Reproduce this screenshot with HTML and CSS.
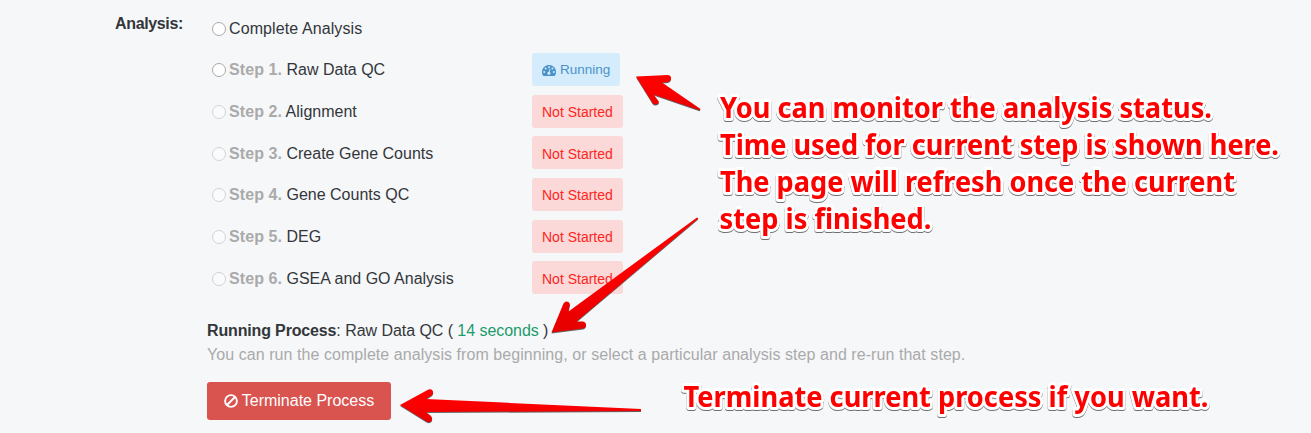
FILE: index.html
```html
<!DOCTYPE html>
<html lang="en">
<head>
<meta charset="utf-8">
<title>Analysis</title>
<link rel="stylesheet" href="styles.css">
</head>
<body>
<form class="form">
  <div class="form-label">Analysis:</div>
  <div class="form-body">
    <div class="steps">
      <label class="step"><span class="radio"></span><span class="name whole">Complete Analysis</span></label>
      <label class="step"><span class="radio"></span><span class="name"><b>Step 1.</b> Raw Data QC</span>
        <span class="badge running"><svg class="gauge" viewBox="0 0 14 11"><path fill="currentColor" d="M7 0A7 7 0 0 0 1.1 10.7Q1.3 11 1.7 11H12.300Q12.700 11 12.900 10.700A7 7 0 0 0 7 0Z"/><g fill="#d4ecfb"><circle cx="2.200" cy="7" r="1"/><circle cx="3.600" cy="3.600" r="1"/><circle cx="7" cy="2.200" r="1"/><circle cx="10.400" cy="3.600" r="1"/><circle cx="11.800" cy="7" r="1"/><circle cx="6.900" cy="8.300" r="1.500"/></g><path d="M7 8 7.900 4.300" stroke="#d4ecfb" stroke-width=".9" stroke-linecap="round"/></svg>Running</span></label>
      <label class="step off"><span class="radio"></span><span class="name"><b>Step 2.</b> Alignment</span><span class="badge">Not Started</span></label>
      <label class="step off"><span class="radio"></span><span class="name"><b>Step 3.</b> Create Gene Counts</span><span class="badge">Not Started</span></label>
      <label class="step off"><span class="radio"></span><span class="name"><b>Step 4.</b> Gene Counts QC</span><span class="badge">Not Started</span></label>
      <label class="step off"><span class="radio"></span><span class="name"><b>Step 5.</b> DEG</span><span class="badge">Not Started</span></label>
      <label class="step off"><span class="radio"></span><span class="name"><b>Step 6.</b> GSEA and GO Analysis</span><span class="badge">Not Started</span></label>
    </div>
    <div class="process"><b>Running Process</b>: Raw Data QC ( <span class="time">14 seconds</span> )</div>
    <div class="help">You can run the complete analysis from beginning, or select a particular analysis step and re-run that step.</div>
    <button class="terminate" type="button"><svg class="ban" viewBox="0 0 14 14" fill="none" stroke="currentColor" stroke-width="1.900"><circle cx="7" cy="7" r="5.900"/><path d="M11 3 3 11"/></svg>Terminate Process</button>
  </div>
</form>
<svg class="notes" viewBox="0 0 1311 433">
  <defs>
    <linearGradient id="red" x1="0" y1="0" x2="0" y2="1"><stop offset="0" stop-color="#f00"/><stop offset=".5" stop-color="#fb0000"/><stop offset="1" stop-color="#e60000"/></linearGradient>
  </defs>
  <g class="arrows" fill="url(#red)">
    <path d="M636 76.500 668 75Q671.500 75.500 671 79Q670.500 81.500 668 82L662 82.500 700.500 109 699.500 110.200 653.500 94.500 658.500 101Q659.500 104 656 104.500Q654 105 652.500 103Z"/>
    <path d="M551.500 332.500 563.500 303.500Q565.500 300.500 568.500 302Q570.500 303.500 569.500 306.500L568.500 311.500 697 217.500 698.300 218.500 576.500 321.500 583 321.500Q586 322 586 325Q586 327.500 583 328.500Z"/>
    <path d="M400 405 428.500 389.500Q432 388.500 433 391.500Q433.500 394 431.500 395.500L426 399 641 409 641 411 426 412 431 416Q433 418.500 431.500 421Q429.500 423 426.500 421.500Z"/>
  </g>
  <g class="callout">
    <text x="720" y="118" textLength="492" lengthAdjust="spacingAndGlyphs">You can monitor the analysis status.</text>
    <text x="720" y="155" textLength="559" lengthAdjust="spacingAndGlyphs">Time used for current step is shown here.</text>
    <text x="720" y="192" textLength="515" lengthAdjust="spacingAndGlyphs">The page will refresh once the current</text>
    <text x="719.500" y="229" textLength="212" lengthAdjust="spacingAndGlyphs">step is finished.</text>
    <text x="683.500" y="407" textLength="525" lengthAdjust="spacingAndGlyphs">Terminate current process if you want.</text>
  </g>
</svg>
</body>
</html>
```
FILE: styles.css
```css
body {
  margin: 0;
  height: 433px;
  overflow: hidden;
  position: relative;
  background: #f6f7f9;
  color: #333639;
  font: 16px/24px "Liberation Sans", Arial, sans-serif;
}
.form {
  display: grid;
  grid-template-columns: 183px 1fr;
  column-gap: 24px;
}
.form-label {
  padding-top: 12px;
  text-align: right;
  font-weight: bold;
  letter-spacing: -.35px;
}
.form-body { padding-top: 7px; }
.steps { padding-left: 5px; }
.step {
  display: flex;
  align-items: center;
  height: 41.670px;
}
.radio {
  box-sizing: border-box;
  width: 14px;
  height: 14px;
  margin: 2px 3px 0 0;
  border: 1px solid #a9a9a9;
  border-radius: 50%;
  background: #fff;
}
.off .radio { border-color: #d2d3d4; background: #fafbfc; }
.name { width: 303px; padding-top: 1.500px; }
.name b { color: #aaa; letter-spacing: .08px; }
.whole { letter-spacing: .1px; }
.badge {
  display: flex;
  align-items: center;
  box-sizing: border-box;
  height: 33px;
  padding: 2px 10px 0;
  border-radius: 3px;
  background: #fad9d8;
  color: #ff261d;
  font-size: 14px;
  white-space: nowrap;
}
.badge.running { background: #d4ecfb; color: #4a93c9; font-size: 13.500px; }
.gauge { width: 14px; height: 11px; margin-right: 4px; }
.process { margin-top: 20px; letter-spacing: -.05px; }
.process b { letter-spacing: -.15px; }
.time { color: #1c9c6b; }
.help { color: #aaa; letter-spacing: .06px; }
.terminate {
  display: flex;
  align-items: center;
  justify-content: center;
  gap: 4px;
  width: 184px;
  height: 38px;
  margin-top: 15px;
  padding: 1px 0 0;
  border: 0;
  border-radius: 3px;
  background: #d9534f;
  color: #fff;
  font: inherit;
  white-space: nowrap;
}
.ban { width: 14px; height: 14px; }
.notes {
  position: absolute;
  inset: 0;
  width: 1311px;
  height: 433px;
  pointer-events: none;
}
.arrows { filter: drop-shadow(0 1px .7px rgba(0, 0, 0, .6)); }
.callout {
  fill: #f00;
  stroke: #fff;
  stroke-width: 6px;
  stroke-linejoin: round;
  paint-order: stroke;
  font: bold 29px "Noto Sans", "Open Sans", sans-serif;
  filter: drop-shadow(0 1px .5px rgba(0, 0, 0, .55));
}
```
